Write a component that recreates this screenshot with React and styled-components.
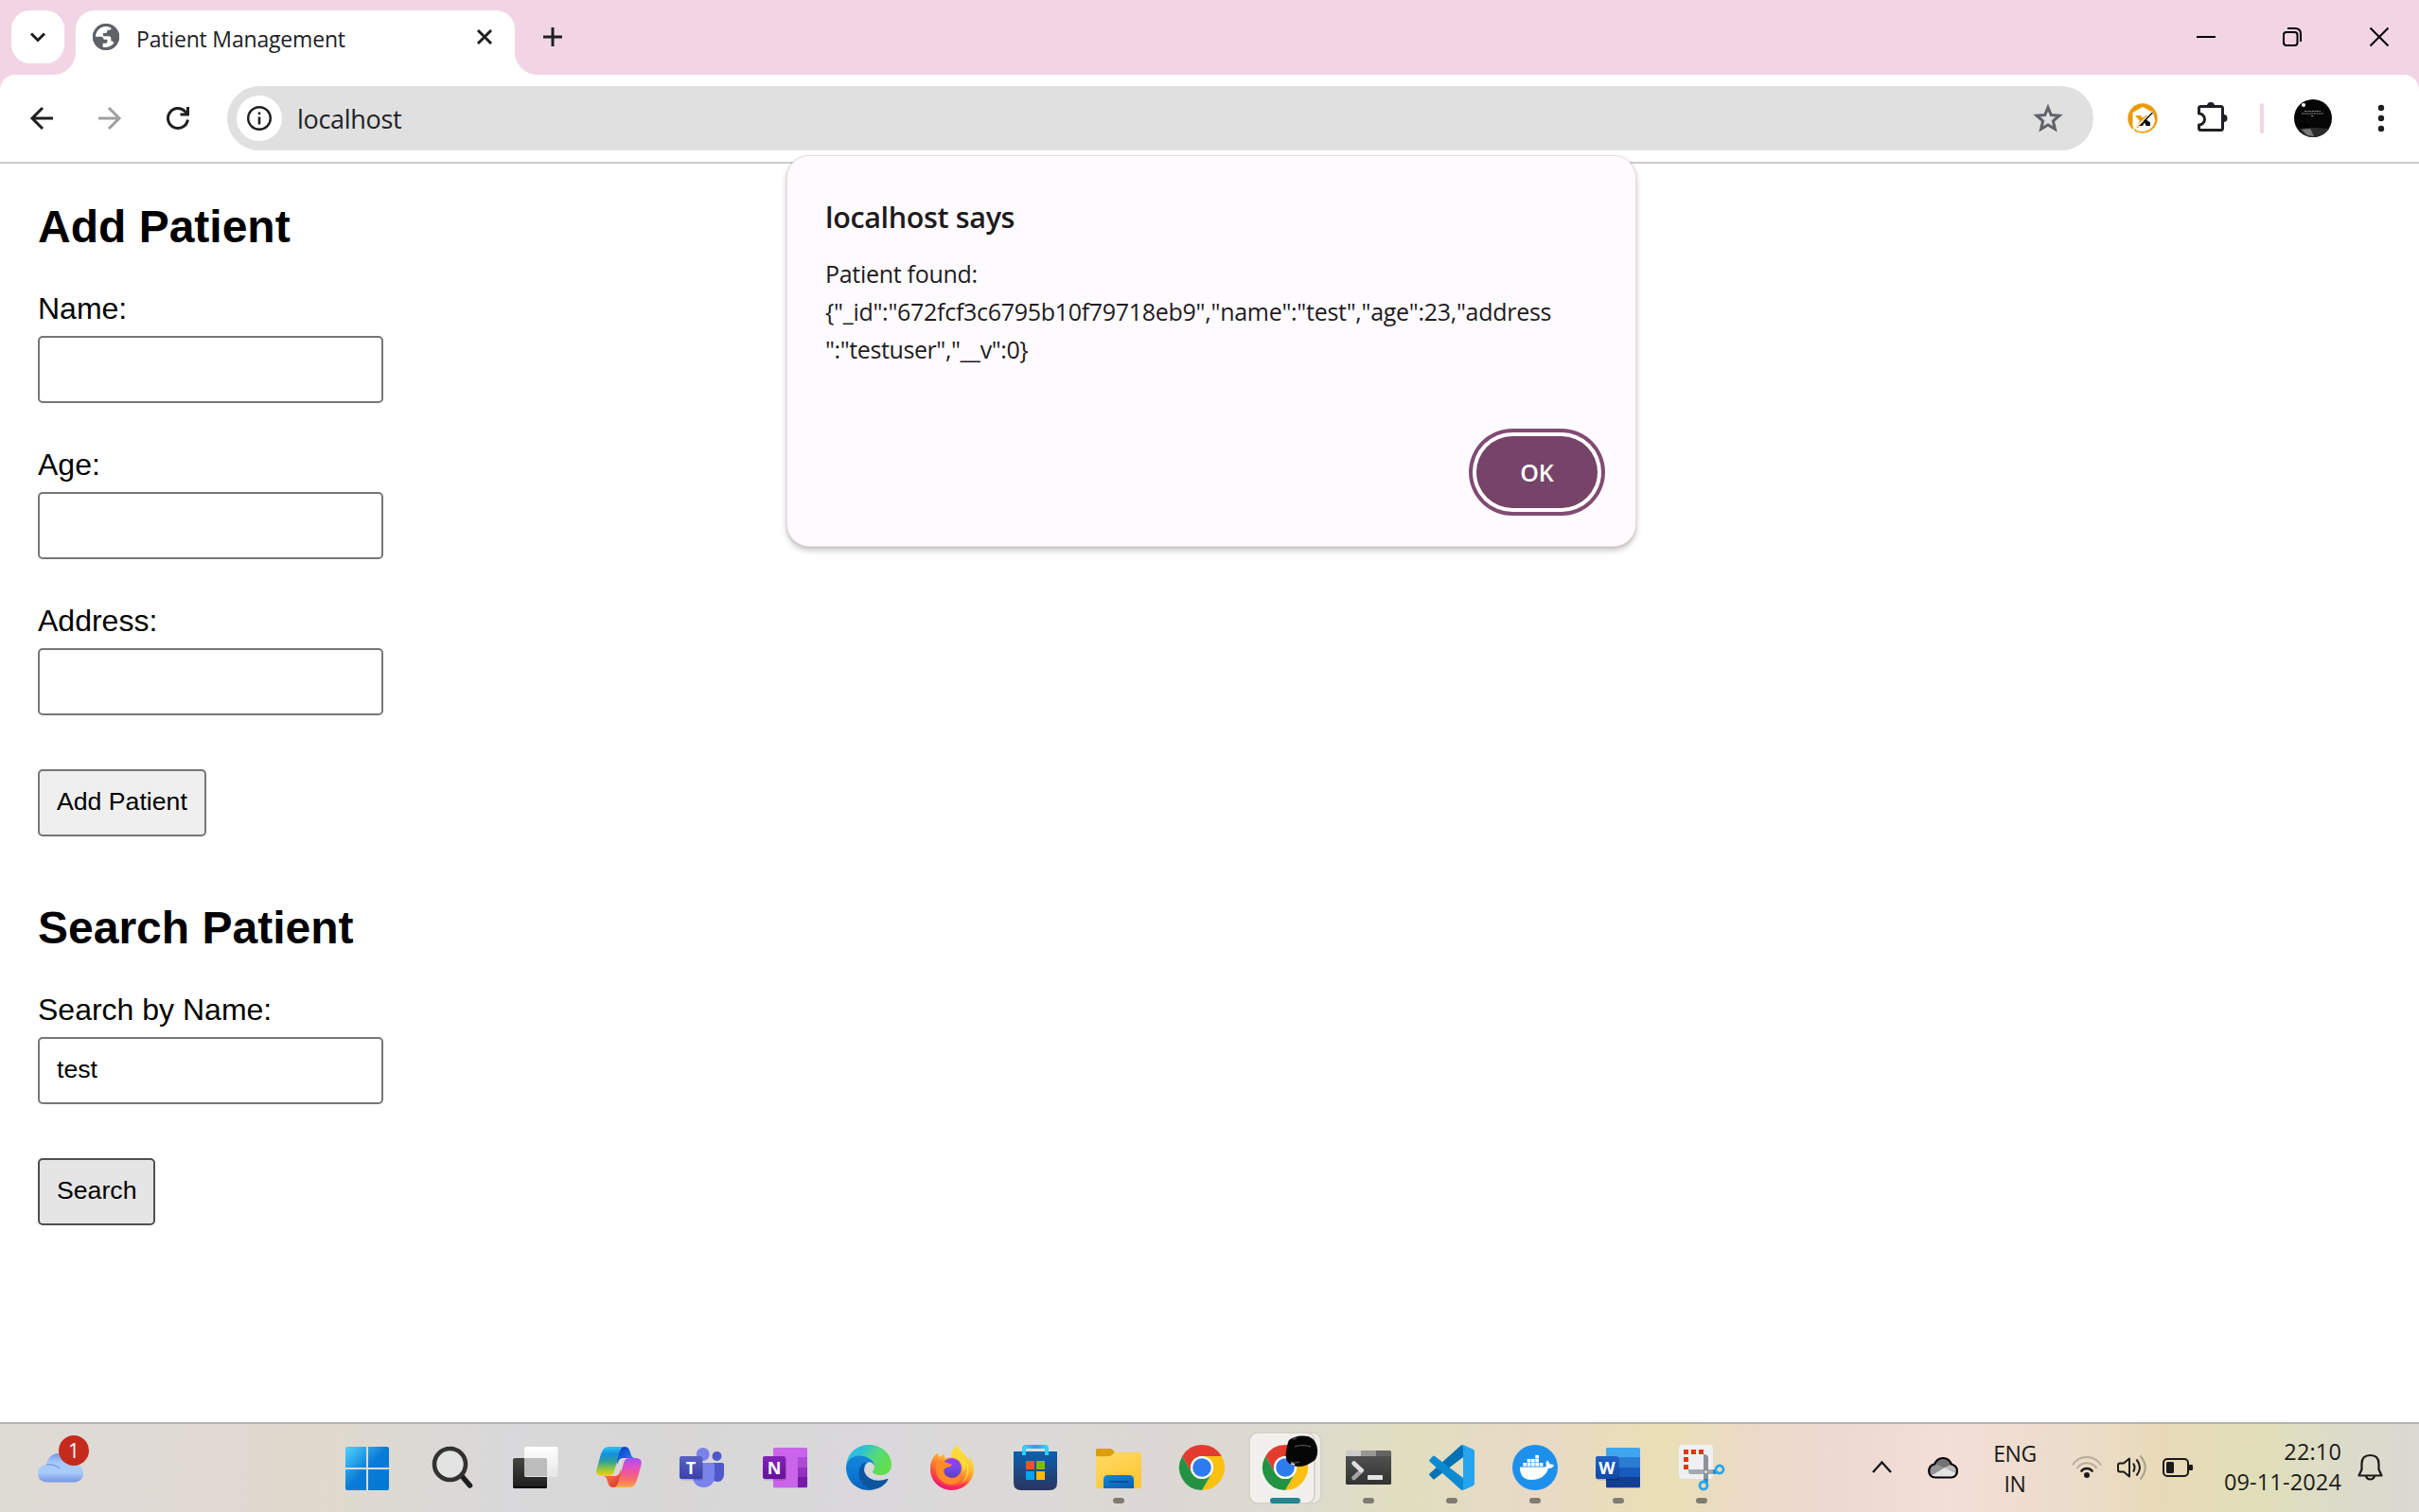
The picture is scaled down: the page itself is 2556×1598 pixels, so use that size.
import React from "react";
import styled, { createGlobalStyle } from "styled-components";

const UI = '"Open Sans", "Noto Sans", sans-serif';
const PAGE = '"Liberation Sans", Arial, sans-serif';

const GlobalStyle = createGlobalStyle`
  *, *::before, *::after { box-sizing: border-box; }
  body { margin: 0; background: #fff; overflow: hidden; }
  svg { display: block; flex: none; overflow: visible; }
`;

const Desktop = styled.div`
  position: relative;
  width: 2556px;
  height: 1598px;
  display: flex;
  flex-direction: column;
  overflow: hidden;
  font-family: ${UI};
`;

/* ---------- browser chrome ---------- */

const TabStrip = styled.header`
  flex: none;
  height: 79px;
  display: flex;
  align-items: flex-start;
  padding: 11px 32px 0 12px;
  background: #f2d5e4;
`;

const TabSearch = styled.button`
  width: 56px;
  height: 56px;
  border: 0;
  padding: 0;
  border-radius: 20px;
  background: #fff;
  display: grid;
  place-items: center;
`;

const Tab = styled.div`
  position: relative;
  width: 464px;
  height: 68px;
  margin-left: 12px;
  padding: 0 24px 12px 18px;
  border-radius: 20px 20px 0 0;
  background: #fff;
  display: flex;
  align-items: center;
  &::before, &::after {
    content: "";
    position: absolute;
    bottom: 0;
    width: 24px;
    height: 24px;
  }
  &::before {
    left: -24px;
    background: radial-gradient(circle at 0 0, transparent 23.5px, #fff 24.5px);
  }
  &::after {
    right: -24px;
    background: radial-gradient(circle at 100% 0, transparent 23.5px, #fff 24.5px);
  }
`;

const TabTitle = styled.span`
  flex: 1;
  padding: 3px 0 0 18px;
  font-size: 23px;
  line-height: 32px;
  letter-spacing: -0.18px;
  white-space: nowrap;
  color: #202124;
`;

const NewTab = styled.div`
  margin: 18px 0 0 30px;
`;

const WindowControls = styled.div`
  display: flex;
  gap: 72px;
  margin: 18px 0 0 auto;
`;

const ToolbarBack = styled.div`
  flex: none;
  height: 94px;
  background: #f2d5e4;
`;

const Toolbar = styled.div`
  height: 94px;
  display: flex;
  align-items: center;
  padding: 0 34px 0 32px;
  background: #fff;
  border-bottom: 2px solid #cbcbcb;
  border-radius: 16px 16px 0 0 / 16px 16px 0 0;
`;

const NavButtons = styled.nav`
  display: flex;
  gap: 48px;
`;

const AddressBar = styled.div`
  width: 1972px;
  height: 68px;
  margin-left: 40px;
  padding: 0 32px 0 10px;
  border-radius: 34px;
  background: #e0e0e0;
  display: flex;
  align-items: center;
`;

const SiteInfo = styled.span`
  width: 48px;
  height: 48px;
  border-radius: 50%;
  background: #fff;
  display: grid;
  place-items: center;
`;

const Url = styled.span`
  flex: 1;
  padding: 1px 0 0 16px;
  font-size: 27px;
  line-height: 36px;
  letter-spacing: -0.3px;
  color: #202124;
`;

const ToolbarActions = styled.div`
  flex: 1;
  display: flex;
  align-items: center;
  padding-left: 36px;
`;

const Extension = styled.span`
  margin-right: 42px;
`;

const Divider = styled.span`
  width: 4px;
  height: 32px;
  border-radius: 2px;
  margin: 0 32px 0 34px;
  background: #f2d5e4;
`;

const MenuSlot = styled.span`
  margin-left: auto;
`;

/* ---------- page ---------- */

const Page = styled.main`
  flex: 1;
  padding: 40px;
  font-family: ${PAGE};
  color: #000;
`;

const Form = styled.form`
  display: flex;
  flex-direction: column;
  align-items: flex-start;
  margin-bottom: 70px;
`;

const Heading = styled.h2`
  margin: 0 0 41px;
  font-size: 48px;
  line-height: 54px;
  font-weight: 700;
`;

const Field = styled.label`
  display: flex;
  flex-direction: column;
  gap: 11px;
  margin-bottom: ${(p) => (p.$last ? 57 : 47)}px;
  font-size: 32px;
  line-height: 36px;
`;

const TextInput = styled.input`
  width: 365px;
  height: 71px;
  margin: 0;
  padding: 0 18px 2px;
  border: 2px solid #767676;
  border-radius: 5px;
  outline: 0;
  background: #fff;
  font-family: ${PAGE};
  font-size: 26.67px;
  color: #000;
`;

const SubmitButton = styled.button`
  height: 71px;
  margin: 0;
  padding: 0 18px 3px;
  border: 2px solid ${(p) => (p.$pressed ? "#4f4f4f" : "#767676")};
  border-radius: 5px;
  background: ${(p) => (p.$pressed ? "#e5e5e5" : "#efefef")};
  font-family: ${PAGE};
  font-size: 26.67px;
  color: #000;
`;

/* ---------- alert ---------- */

const Alert = styled.section`
  position: absolute;
  left: 831px;
  top: 164px;
  width: 898px;
  height: 414px;
  padding: 42px 32px 32px 40px;
  display: flex;
  flex-direction: column;
  border: 1px solid #ecdce4;
  border-radius: 24px;
  background: #fefbff;
  box-shadow: 0 4px 6px rgba(0, 0, 0, 0.2), 0 1px 3px rgba(0, 0, 0, 0.1);
  color: #1f1a1e;
`;

const AlertTitle = styled.h1`
  margin: 0 0 18px;
  font-size: 30.5px;
  line-height: 44px;
  font-weight: 600;
  letter-spacing: -0.35px;
`;

const AlertText = styled.p`
  margin: 0;
  font-size: 25px;
  line-height: 40px;
  letter-spacing: ${(p) => p.$spacing || -0.29}px;
  white-space: nowrap;
`;

const OkButton = styled.button`
  align-self: flex-end;
  width: 128px;
  height: 76px;
  margin: auto 8px 8px 0;
  padding: 0;
  border: 0;
  border-radius: 38px;
  background: #754468;
  box-shadow: 0 0 0 4px #fff, 0 0 0 8px #824b74;
  font-family: ${UI};
  font-size: 25px;
  font-weight: 600;
  color: #fff;
`;

/* ---------- taskbar ---------- */

const Taskbar = styled.footer`
  flex: none;
  height: 95px;
  display: flex;
  align-items: flex-start;
  border-top: 2px solid #b3afac;
  background: linear-gradient(
    92deg,
    #dedad4 0, #dfdad5 150px, #e1d9d4 220px, #e1d9cc 330px, #dcdad4 430px, #d9d8da 540px,
    #d8d7d6 720px, #dad8db 930px, #dbdad6 1060px, #dcd7d4 1230px, #dddbd0 1370px,
    #e1debf 1490px, #e8dac6 1620px, #eadfb5 1760px, #ebdac8 1850px, #edd9d2 1950px,
    #f2dfd7 2060px, #ecdccb 2190px, #e8dab8 2285px, #e1dfb9 2390px, #dddcc8 2460px,
    #dad9d3 2556px
  );
  color: #1b1a19;
`;

const Widgets = styled.div`
  width: 364px;
  padding: 14px 0 0 38px;
`;

const Apps = styled.div`
  display: flex;
  gap: 40px;
  padding-top: 22px;
`;

const App48 = styled.div`
  position: relative;
  width: 48px;
  height: 64px;
  margin-right: ${(p) => (p.$start ? 2 : 0)}px;
  display: flex;
  flex-direction: column;
  align-items: center;
  gap: 8px;
`;

const ActiveTile = styled.span`
  position: absolute;
  left: -15px;
  top: -14px;
  width: ${(p) => p.$width}px;
  height: 77px;
  border: 2px solid rgba(205, 203, 194, 0.75);
  border-radius: 10px;
  background: rgba(243, 242, 237, 0.75);
`;

const Running = styled.span`
  position: relative;
  width: ${(p) => (p.$active ? 32 : 12)}px;
  height: 6px;
  border-radius: 3px;
  background: ${(p) => (p.$active ? "#268391" : "#807c72")};
`;

const AppGlyph = styled.div`
  position: relative;
  width: 48px;
  height: 48px;
`;

const Tray = styled.div`
  margin-left: auto;
  display: flex;
  align-items: flex-start;
  padding: 22px 38px 0 0;
`;

const TrayIcon = styled.span`
  margin-right: ${(p) => p.$gap}px;
`;

const Language = styled.div`
  width: 48px;
  margin: -7px 36px 0 -1px;
  text-align: center;
  font-size: 23px;
  line-height: 32px;
  letter-spacing: -0.4px;
`;

const Clock = styled.div`
  width: 150px;
  margin-right: 17px;
  margin-top: -9px;
  text-align: right;
  font-size: 23.5px;
  line-height: 32px;
  letter-spacing: ${(p) => p.$spacing || 0.15}px;
`;

const Svg = ({ w = 48, h = 48, children, ...rest }) => (
  <svg width={w} height={h} viewBox={`0 0 ${w} ${h}`} fill="none" {...rest}>
    {children}
  </svg>
);

const Lin = ({ id, stops, x2 = 0, y2 = 1 }) => (
  <linearGradient id={id} x1="0" y1="0" x2={x2} y2={y2}>
    {stops.map((c, i) => (
      <stop key={i} offset={i / (stops.length - 1)} stopColor={c} />
    ))}
  </linearGradient>
);

const Globe = () => (
  <Svg w={28} h={28}>
    <circle cx="14" cy="14" r="14" fill="#5f6368" />
    <path d="M11 3.3C6.500 4.600 3.200 8.600 3 13.700H8.500C10.500 13.700 11.600 15 11.600 16.800H15.400V19.300C15.400 20.200 14.600 20.800 13.600 20.800H10.700V25C15 25.800 19.500 24 22.300 20.800C21.800 19 20.800 18.300 19.300 18.300V15.500C19.300 14 18.300 13.200 17 13.200H11V10H13.300C14.600 10 15.300 9.200 15.300 8V6.800H17.600C18.700 6.800 19.500 5.600 19.500 4.400C16.800 3 13.800 2.600 11 3.300Z" fill="#fff" />
    <circle cx="14" cy="14" r="12.6" stroke="#5f6368" strokeWidth="2.8" />
  </Svg>
);

const Avatar = () => (
  <Svg w={40} h={40}>
    <circle cx="20" cy="20" r="20" fill="#060606" />
    <circle cx="10" cy="6" r="2" fill="#fff" />
    <path d="M11 12.500H28M8 15H31M18 17.500H21" stroke="#8c8c8c" strokeWidth="1" strokeDasharray="2 .6" />
    <path d="M5 31Q19 29 37 31A20 20 0 0 1 10 37Z" fill="#2c2c2c" />
    <path d="M8 32L17 31 21 39 14 38Z" fill="#777" />
    <path d="M4 26Q10 22 17 28V30H4Z" fill="#000" />
  </Svg>
);

const ChromeLogo = () => (
  <Svg>
    <path d="M3.200 12A24 24 0 0 1 44.800 12H24A12 12 0 0 0 13.600 30Z" fill="#e33b2e" />
    <path d="M44.800 12A24 24 0 0 1 24 48L34.400 30A12 12 0 0 0 24 12Z" fill="#fcc011" />
    <path d="M24 48A24 24 0 0 1 3.200 12L13.600 30A12 12 0 0 0 34.400 30Z" fill="#229342" />
    <circle cx="24" cy="24" r="12" fill="#fff" />
    <circle cx="24" cy="24" r="9.8" fill="#2d7bee" />
  </Svg>
);

const LetterTile = ({ letter, fill }) => (
  <>
    <rect x="1" y="13.500" width="24" height="24" rx="2" fill="#000" opacity=".18" />
    <rect x="0" y="12" width="24" height="24" rx="2" fill={fill} />
    <text x="12" y="30.500" textAnchor="middle" fontFamily={UI} fontWeight="700" fontSize="18" fill="#fff">
      {letter}
    </text>
  </>
);

const StartLogo = () => (
  <Svg>
    <defs><Lin id="win" stops={["#4fd3ff", "#0a7bd8", "#0078d4"]} x2={1} /></defs>
    <path d="M3 2H23V24H1V4Q1 2 3 2ZM25 2H45Q47 2 47 4V24H25ZM1 26H23V48H3Q1 48 1 46ZM25 26H47V46Q47 48 45 48H25Z" fill="url(#win)" />
  </Svg>
);

const SearchLogo = () => (
  <Svg>
    <path d="M34 33L42.500 43" stroke="#1f1f1f" strokeWidth="5.500" strokeLinecap="round" />
    <circle cx="21.500" cy="20.500" r="16.500" fill="#e4e3e3" stroke="#333230" strokeWidth="4.600" />
  </Svg>
);

const TaskView = () => (
  <Svg>
    <defs><Lin id="tvd" stops={["#454440", "#1d1d1d"]} /><Lin id="tvl" stops={["#fff", "#e6e6e6"]} /></defs>
    <rect x="0" y="14" width="36" height="32" rx="2" fill="url(#tvd)" />
    <path d="M0 44H36Q36 46 34 46H2Q0 46 0 44Z" fill="#050505" />
    <rect x="12" y="2" width="35.500" height="32" rx="2" fill="url(#tvl)" />
    <path d="M12 14H34Q36 14 36 16V33H12Z" fill="#bcbcbc" />
  </Svg>
);

const Copilot = () => (
  <Svg>
    <defs>
      <Lin id="cpa" stops={["#2bc4f5", "#128fe0", "#2f9f9a", "#8fc440", "#f7d00c"]} />
      <Lin id="cpb" stops={["#ffa64f", "#f9725f", "#f0559a", "#d94fd0", "#a24cf5"]} />
      <Lin id="cpc" stops={["#0e2fb8", "#1a62dd", "#2aa6f0"]} x2={1} />
      <Lin id="cpd" stops={["#c92b2b", "#ee5a3c", "#ff8f4a"]} x2={1} />
    </defs>
    <g transform="translate(0 2)">
      <path d="M20 0H30C34 0 35 3 36 6C37 9.500 38 12 41.500 12H29C24.500 12 23.500 14.500 22 19Z" fill="url(#cpc)" />
      <path d="M13 0C8 0 6 4 4 11L1 22C-1.500 29 2 31 7 31H13C17.500 31 18.500 28 19.500 24L23 12C24.500 5 26 0 30 0Z" fill="url(#cpa)" />
      <g transform="rotate(180 24 21.500)">
        <path d="M20 0H30C34 0 35 3 36 6C37 9.500 38 12 41.500 12H29C24.500 12 23.500 14.500 22 19Z" fill="url(#cpd)" />
        <path d="M13 0C8 0 6 4 4 11L1 22C-1.500 29 2 31 7 31H13C17.500 31 18.500 28 19.500 24L23 12C24.500 5 26 0 30 0Z" fill="url(#cpb)" />
      </g>
    </g>
  </Svg>
);

const Teams = () => (
  <Svg>
    <defs><Lin id="tm" stops={["#5a62c3", "#3940ab"]} /></defs>
    <circle cx="39.500" cy="12" r="5" fill="#5059c9" />
    <path d="M34 19H45Q47 19 47 21V31C47 36 44 39 40 39Q36 39 34 36Z" fill="#5059c9" />
    <circle cx="24.700" cy="10" r="7" fill="#7b83eb" />
    <path d="M14 19H35Q37 19 37 21V33C37 41 32 45 25.500 45S14 41 14 33Z" fill="#7b83eb" />
    <LetterTile letter="T" fill="url(#tm)" />
  </Svg>
);

const OneNote = () => (
  <Svg>
    <defs><Lin id="on" stops={["#8324bb", "#661199"]} /></defs>
    <rect x="11" y="3.500" width="36" height="42" rx="1.500" fill="#777" opacity=".5" />
    <rect x="11" y="3" width="36" height="42" rx="1.500" fill="#ca64ea" />
    <path d="M37 13H47V24H37Z" fill="#ae4bd5" />
    <path d="M37 24H47V34H37Z" fill="#9332bf" />
    <path d="M37 34H47V43.500Q47 45 45.500 45H37Z" fill="#7719aa" />
    <LetterTile letter="N" fill="url(#on)" />
  </Svg>
);

const Edge = () => (
  <Svg>
    <defs>
      <Lin id="eda" stops={["#35b8f5", "#2cc1d5", "#56d97a", "#62de4c"]} x2={1} y2={0.5} />
      <Lin id="edb" stops={["#1687d8", "#0a7ad6", "#0c62b8"]} />
    </defs>
    <path d="M.5 20C2 8 12 0 24 0C38 0 48 10 48 21C48 28 43 32 37 32C31 32 28 30 28 28.500C28 27.500 30 26 30 23C30 19 27 17 23 17Z" fill="url(#eda)" />
    <path d="M0 24C0 17 6 11.500 14 11.500C22 11.500 29 15.500 30 22.500C28 18 24 17 21.500 20C18 24 17 36 30 47.200Q27 48 24 48C10 48 0 37 0 24Z" fill="url(#edb)" />
    <path d="M20 18.500C13 22 11 32 17 40C21 45.500 27 48.500 33 46.300C38 44.500 42 41 44.300 37C44.600 36 44 35.700 43 36.100C34 39.500 23 37.500 19.500 29C18 25 18.500 21 21 19Z" fill="#0e559f" />
  </Svg>
);

const Firefox = () => (
  <Svg>
    <defs>
      <linearGradient id="ff" x1=".8" y1="0" x2=".25" y2="1">
        <stop offset="0" stopColor="#fff14a" />
        <stop offset=".35" stopColor="#ffc233" />
        <stop offset=".6" stopColor="#ff7a2f" />
        <stop offset=".82" stopColor="#ff3b47" />
        <stop offset="1" stopColor="#e31587" />
      </linearGradient>
      <Lin id="ffp" stops={["#9a3fe8", "#7548f0", "#5b3fb8"]} />
    </defs>
    <g transform="translate(1 0)">
      <path d="M0 26C0 20 1.500 13.500 7.500 8.500L9.500 13L14.500 9.500L15.500 14.500C18 13 20 12.700 22 13C22 7 25 3 29.500 .5C31 7 39 10.500 40.500 17L41.500 13C45 17 46 22 46 26C46 38 36 48 23 48C10 48 0 38 0 26Z" fill="url(#ff)" />
      <circle cx="22.500" cy="24.500" r="10.500" fill="url(#ffp)" />
      <path d="M6 21C8 16 11 16.500 14 17.500C17 18.500 20 20 23 21C22 24 17 23 15 25.500C13 28 15 33 21 35C27 36.500 31 34 33 30C34 38 28 42 22 42C12 42 4 33 6 21Z" fill="#ff8a26" />
      <path d="M22 13C29 12.500 36 18 34 29C36 27 37 24 37 21C40 27 39 34 34 39C43 34 42 20 35 13Q30 9 29.500 .5C25 3 22 7 22 13Z" fill="#ffd93c" />
      <path d="M4 36C12 46 27 47 40 38C33 50 12 51 4 36Z" fill="#e81e74" opacity=".75" />
    </g>
  </Svg>
);

const Store = () => (
  <Svg>
    <defs><Lin id="st" stops={["#0a62b0", "#1d4a86", "#2a3460"]} /><Lin id="sth" stops={["#2fd4f8", "#2a9df0", "#2fd4f8"]} x2={1} y2={0} /></defs>
    <path d="M1 7H47V40Q47 48 39 48H9Q1 48 1 40Z" fill="url(#st)" />
    <path d="M12 11V3.500Q12 2 13.500 2H34.500Q36 2 36 3.500V11" stroke="url(#sth)" strokeWidth="4" />
    <path d="M14 17H23V26H14Z" fill="#f25022" /><path d="M25 17H34V26H25Z" fill="#7fba00" />
    <path d="M14 28H23V37H14Z" fill="#00a4ef" /><path d="M25 28H34V37H25Z" fill="#ffb900" />
  </Svg>
);

const Explorer = () => (
  <Svg>
    <defs><Lin id="ex" stops={["#ffdb65", "#ffc736"]} x2={0.6} /><Lin id="exb" stops={["#1088dd", "#0a64b8"]} x2={0.7} /></defs>
    <path d="M0 5.500Q0 4 1.500 4H15Q17 4 18 5.500L20 8.500V13H0Z" fill="#dd9e06" />
    <path d="M0 12Q8 12.500 13 12Q16 12 18 9.500Q19.500 8 21 8H46.500Q48 8 48 9.500V44.500Q48 46 46.500 46H1.500Q0 46 0 44.500Z" fill="url(#ex)" />
    <path d="M8 46V37Q8 32 13 32H35Q40 32 40 37V46Z" fill="url(#exb)" />
    <path d="M15 39H33" stroke="#0a4f94" strokeWidth="2" strokeLinecap="round" />
  </Svg>
);

const Terminal = () => (
  <Svg>
    <defs><Lin id="te" stops={["#505050", "#323232"]} /></defs>
    <path d="M0 12H48V40.500Q48 42 46.500 42H1.500Q0 42 0 40.500Z" fill="url(#te)" />
    <path d="M1.500 6H16V12H0V7.500Q0 6 1.500 6Z" fill="#cbcbcb" />
    <path d="M16 6H32V12H16Z" fill="#979797" />
    <path d="M32 6H46.500Q48 6 48 7.500V12H32Z" fill="#646464" />
    <path d="M17 27L8.500 35" stroke="#a5a5a5" strokeWidth="4.600" strokeLinecap="round" />
    <path d="M8.500 19.500L16.500 27" stroke="#dedede" strokeWidth="4.600" strokeLinecap="round" />
    <rect x="23" y="32" width="16" height="5" rx=".8" fill="#e4e4e4" />
  </Svg>
);

const Code = () => (
  <Svg>
    <path d="M.7 32.500Q-.5 31.300 1 30L33.500 .8Q34.500 0 36 0V13L6 36Q5 37 4 36Z" fill="#0471b4" />
    <path d="M.7 15.500Q-.5 16.700 1 18L33.500 47.200Q34.500 48 36 48V35L6 12Q5 11 4 12Z" fill="#0a8ad0" />
    <path d="M33.500 .8Q35 -.3 36.500 .3L46.500 4.800Q48 5.500 48 7V41Q48 42.500 46.500 43.200L36.500 47.700Q35 48.300 33.500 47.200Q36 47.500 36 44.500V3.500Q36 .5 33.500 .8Z" fill="#25a4ef" />
  </Svg>
);

const Docker = () => (
  <Svg>
    <circle cx="24" cy="24" r="24" fill="#1d90ee" />
    <path d="M8 23.500H33.500Q35.500 23.500 36 22Q34.500 19 37 16.500Q39 18 39.500 20.500Q42 20 44 21.500Q42.500 25 38 25Q34 37 20 37Q8 37 8 23.500Z" fill="#fff" />
    <g fill="#fff">
      {[11.3, 15.7, 20, 24.3, 28.7].map((x) => <rect key={x} x={x} y="19" width="3.700" height="3.600" />)}
      {[15.7, 20, 24.3].map((x) => <rect key={x} x={x} y="14.900" width="3.700" height="3.600" />)}
      <rect x="24.300" y="10.900" width="3.700" height="3.500" />
    </g>
  </Svg>
);

const Word = () => (
  <Svg>
    <defs><Lin id="wo" stops={["#1f63c8", "#1449a8"]} /></defs>
    <rect x="11" y="4" width="36" height="42" rx="1.500" fill="#666" opacity=".4" />
    <path d="M12.500 3H45.500Q47 3 47 4.500V13H11V4.500Q11 3 12.500 3Z" fill="#41a5ee" />
    <path d="M11 13H47V24H11Z" fill="#2b7cd3" />
    <path d="M11 24H47V34H11Z" fill="#185abd" />
    <path d="M11 34H47V43.500Q47 45 45.500 45H12.500Q11 45 11 43.500Z" fill="#103f91" />
    <LetterTile letter="W" fill="url(#wo)" />
  </Svg>
);

const Snip = () => (
  <Svg>
    <rect x="0" y="0" width="36" height="36" rx="4" fill="#eff0f3" />
    <path d="M5 5H10V10H5ZM13 5H18V10H13ZM21 5H26V10H21ZM5 13H10V18H5ZM5 21H10V26H5Z" fill="#d83b01" />
    <path d="M10 26H36V31H13Q10 31 10 28Z" fill="#a4a9ae" />
    <path d="M26 10Q31 10 31 14V36H26Z" fill="#8d9298" />
    <circle cx="28.500" cy="28.500" r="1.500" fill="#e5e5e5" />
    <path d="M36 28.500H40M28.500 36V40" stroke="#1689d6" strokeWidth="4.600" />
    <circle cx="43" cy="26" r="4" stroke="#27a7ea" strokeWidth="2.800" />
    <circle cx="26" cy="43" r="4" stroke="#27a7ea" strokeWidth="2.800" />
  </Svg>
);

const apps = [
  { name: "start", Logo: StartLogo, start: true },
  { name: "search", Logo: SearchLogo },
  { name: "taskview", Logo: TaskView },
  { name: "copilot", Logo: Copilot },
  { name: "teams", Logo: Teams },
  { name: "onenote", Logo: OneNote },
  { name: "edge", Logo: Edge },
  { name: "firefox", Logo: Firefox },
  { name: "store", Logo: Store },
  { name: "explorer", Logo: Explorer, running: true },
  { name: "chrome", Logo: ChromeLogo },
  { name: "chrome-profile", Logo: ChromeLogo, running: true, active: true },
  { name: "terminal", Logo: Terminal, running: true },
  { name: "code", Logo: Code, running: true },
  { name: "docker", Logo: Docker, running: true },
  { name: "word", Logo: Word, running: true },
  { name: "snip", Logo: Snip, running: true },
];

const ProfileBadge = styled.span`
  position: absolute;
  left: 24px;
  top: -11px;
`;

function Browser() {
  return (
    <>
      <TabStrip>
        <TabSearch>
          <Svg w={16} h={10}><path d="M1 1.500L8 8.500 15 1.500" stroke="#1f1f1f" strokeWidth="3" /></Svg>
        </TabSearch>
        <Tab>
          <Globe />
          <TabTitle>Patient Management</TabTitle>
          <Svg w={16} h={16}><path d="M1 1L15 15M15 1L1 15" stroke="#1f1f1f" strokeWidth="3" /></Svg>
        </Tab>
        <NewTab>
          <Svg w={20} h={20}><path d="M10 0V20M0 10H20" stroke="#1f1f1f" strokeWidth="3" /></Svg>
        </NewTab>
        <WindowControls>
          <Svg w={20} h={20}><path d="M1 10H21" stroke="#000" strokeWidth="2" /></Svg>
          <Svg w={20} h={20}>
            <rect x="1" y="5" width="14.500" height="14" rx="3" stroke="#000" strokeWidth="2" />
            <path d="M5 1H13Q19 1 19 7V15" stroke="#000" strokeWidth="2" />
          </Svg>
          <Svg w={20} h={20}><path d="M.5 .5L19.500 19.500M19.500 .5L.5 19.500" stroke="#000" strokeWidth="2" /></Svg>
        </WindowControls>
      </TabStrip>
      <ToolbarBack>
        <Toolbar>
          <NavButtons>
            <Svg w={24} h={24}><path d="M24 12H2M13 1L2 12 13 23" stroke="#1f1f1f" strokeWidth="3" /></Svg>
            <Svg w={24} h={24}><path d="M0 12H22M11 1L22 12 11 23" stroke="#a0a0a0" strokeWidth="3" /></Svg>
            <Svg w={24} h={24}>
              <path d="M22.400 13.500A10.500 10.500 0 1 1 19.500 4.700L22.500 8" stroke="#1f1f1f" strokeWidth="3" />
              <path d="M14.500 8H22.500V0" stroke="#1f1f1f" strokeWidth="3" />
            </Svg>
          </NavButtons>
          <AddressBar>
            <SiteInfo>
              <Svg w={26} h={26}>
                <circle cx="13" cy="13" r="11.800" stroke="#1f1f1f" strokeWidth="2.400" />
                <path d="M13 11.500V19.500M13 6.500V9" stroke="#1f1f1f" strokeWidth="2.600" />
              </Svg>
            </SiteInfo>
            <Url>localhost</Url>
            <Svg w={32} h={30}>
              <path d="M16 3.500L19.300 11.500 28 12.200 21.400 17.900 23.400 26.400 16 21.900 8.600 26.400 10.600 17.900 4 12.200 12.700 11.500Z" stroke="#5f6368" strokeWidth="3" />
            </Svg>
          </AddressBar>
          <ToolbarActions>
            <Extension>
              <Svg w={32} h={32}>
                <circle cx="16" cy="16" r="15.700" fill="#eb9b08" />
                <path d="M5.500 10L16 4 27 10 29 18A13 13 0 0 1 16 30A13 13 0 0 1 5.500 25Z" fill="#fff" />
                <path d="M8 13H14L16 15.500 19.500 13H23L11 26H8L13 19Z" fill="#eb9b08" />
                <path d="M26.500 10L12 24H16L18 20.500 19.500 24H24V20.500L20 17.500Z" fill="#111" />
                <path d="M26.500 9L6 28" stroke="#fff" strokeWidth="1.500" />
                <path d="M26.500 10L17 19.500" stroke="#111" strokeWidth="1.500" />
              </Svg>
            </Extension>
            <Svg w={32} h={36}>
              <path d="M1.500 25V28.500Q1.500 30.500 3.500 30.500H24.500Q26.500 30.500 26.500 28.500V7.500Q26.500 5.500 24.500 5.500H3.500Q1.500 5.500 1.500 7.500V13A5.700 5.700 0 0 1 1.500 25Z" stroke="#202024" strokeWidth="3" strokeLinejoin="round" />
              <path d="M10 5A4 4 0 0 1 18 5ZM27.500 14A4 4 0 0 1 27.500 22Z" fill="#202024" />
            </Svg>
            <Divider />
            <Avatar />
            <MenuSlot>
              <Svg w={12} h={30}>
                {[4, 15, 26].map((y) => <circle key={y} cx="6" cy={y} r="3.200" fill="#1f1f1f" />)}
              </Svg>
            </MenuSlot>
          </ToolbarActions>
        </Toolbar>
      </ToolbarBack>
    </>
  );
}

function PatientPage() {
  return (
    <Page>
      <Form>
        <Heading>Add Patient</Heading>
        <Field>Name:<TextInput readOnly /></Field>
        <Field>Age:<TextInput readOnly /></Field>
        <Field $last>Address:<TextInput readOnly /></Field>
        <SubmitButton type="button">Add Patient</SubmitButton>
      </Form>
      <Form>
        <Heading>Search Patient</Heading>
        <Field $last>Search by Name:<TextInput readOnly value="test" /></Field>
        <SubmitButton type="button" $pressed>Search</SubmitButton>
      </Form>
    </Page>
  );
}

function WindowsTaskbar() {
  return (
    <Taskbar>
      <Widgets>
        <Svg w={60} h={50}>
          <defs><Lin id="cl" stops={["#739be8", "#a9cbfa", "#a9cbfa", "#7496e2"]} /></defs>
          <path d="M2 38C2 33 5 29 11 29C12 22 17 17 24 17C33 17 37 22 39 28C46 28 50 32 50 38C50 44 46 47.500 40 47.500H12C6 47.500 2 44 2 38Z" fill="url(#cl)" />
          <path d="M11 29C17 28 22 30 25 33" stroke="#7f9fe6" strokeWidth="1.500" />
          <circle cx="40" cy="14" r="16" fill="#c42b1c" />
          <text x="40" y="22" textAnchor="middle" fontFamily={UI} fontSize="21" fill="#fff">1</text>
        </Svg>
      </Widgets>
      <Apps>
        {apps.map(({ name, Logo, start, running, active }) => (
          <App48 key={name} $start={start}>
            {active && <ActiveTile $width={78} />}
            {active && <ActiveTile $width={71} />}
            <AppGlyph>
              <Logo />
              {active && (
                <ProfileBadge>
                  <Svg w={34} h={36}>
                    <path d="M4 6Q12 0 24 2Q33 5 34 16Q35 27 27 30Q18 36 8 33Q-1 30 1 18Q2 10 4 6Z" fill="#060606" />
                    <path d="M8 5L12 4M10 13Q18 10 27 13M6 29Q10 31 15 29" stroke="#4a4a4a" strokeWidth="1.500" />
                    <path d="M6 31L10 32" stroke="#ccc" strokeWidth="2" />
                  </Svg>
                </ProfileBadge>
              )}
            </AppGlyph>
            {running && <Running $active={active} />}
          </App48>
        ))}
      </Apps>
      <Tray>
        <TrayIcon $gap={38}>
          <Svg w={21} h={48}><path d="M1 29L10.500 18.500 20 29" stroke="#1b1a19" strokeWidth="2.400" /></Svg>
        </TrayIcon>
        <TrayIcon $gap={37}>
          <Svg w={32} h={48}>
            <path d="M1.200 28C1.200 23 4 21 7 20.500C9 16 12 14 16 14C20.500 14 23.500 17 25 20.500C29 21.500 31 24 31 28C31 32 28 34.500 25 34.500H8C4 34.500 1.200 32 1.200 28Z" fill="#949494" />
            <path d="M3 33L18 24 30 30Q29 34.500 25 34.500H8Q5 34.500 3 33Z" fill="#e3e3e3" />
            <path d="M18 24L26 20.500Q31 23 31 29.500Z" fill="#bcbcbc" />
            <path d="M8 20Q11 14 16 14C20.500 14 23.500 17 25 20.500L17 24Z" fill="#737373" />
            <path d="M1.200 28C1.200 23 4 21 7 20.500C9 16 12 14 16 14C20.500 14 23.500 17 25 20.500C29 21.500 31 24 31 28C31 32 28 34.500 25 34.500H8C4 34.500 1.200 32 1.200 28Z" stroke="#000" strokeWidth="2.200" />
          </Svg>
        </TrayIcon>
        <Language>ENG<br />IN</Language>
        <TrayIcon $gap={17}>
          <Svg w={32} h={48}>
            <path d="M1 21.500A17.500 17.500 0 0 1 31 21.500M5.500 25A12.500 12.500 0 0 1 26.500 25" stroke="#1b1a19" strokeOpacity=".25" strokeWidth="2" />
            <path d="M9.800 28.500A7.200 7.200 0 0 1 22.200 28.500" stroke="#1b1a19" strokeWidth="2.400" />
            <circle cx="16" cy="32" r="3" fill="#1b1a19" />
          </Svg>
        </TrayIcon>
        <TrayIcon $gap={16}>
          <Svg w={32} h={48}>
            <path d="M12 14.500V33.500L6 28.500H2Q0 28.500 0 26.500V21.500Q0 19.500 2 19.500H6Z" stroke="#1b1a19" strokeWidth="2" strokeLinejoin="round" />
            <path d="M16 19.500Q19 24 16 28.500M19.500 15.500Q26.500 24 19.500 32.500" stroke="#1b1a19" strokeWidth="2" />
            <path d="M23.500 11.500Q34 24 23.500 36.500" stroke="#1b1a19" strokeOpacity=".3" strokeWidth="2" />
          </Svg>
        </TrayIcon>
        <TrayIcon $gap={6}>
          <Svg w={32} h={48}>
            <rect x="0" y="15" width="26" height="18" rx="4" stroke="#1b1a19" strokeWidth="2" />
            <rect x="3" y="18" width="8" height="12" rx="1.500" fill="#1b1a19" />
            <path d="M27 21H30Q31 21 31 22V26Q31 27 30 27H27Z" fill="#1b1a19" />
          </Svg>
        </TrayIcon>
        <Clock>22:10<br />09-11-2024</Clock>
        <Svg w={27} h={48}>
          <path d="M4.500 20Q4.500 11 13.500 11T22.500 20V26L25.500 32.500H1.500L4.500 26Z" stroke="#1b1a19" strokeWidth="2.200" strokeLinejoin="round" />
          <path d="M9 33Q10 36.500 13.500 36.500T18 33" stroke="#1b1a19" strokeWidth="2.200" />
        </Svg>
      </Tray>
    </Taskbar>
  );
}

export default function App() {
  return (
    <Desktop>
      <GlobalStyle />
      <Browser />
      <PatientPage />
      <WindowsTaskbar />
      <Alert role="alertdialog">
        <AlertTitle>localhost says</AlertTitle>
        <AlertText>Patient found:</AlertText>
        <AlertText>{'{"_id":"672fcf3c6795b10f79718eb9","name":"test","age":23,"address'}</AlertText>
        <AlertText $spacing={-0.4}>{'":"testuser","__v":0}'}</AlertText>
        <OkButton>OK</OkButton>
      </Alert>
    </Desktop>
  );
}
